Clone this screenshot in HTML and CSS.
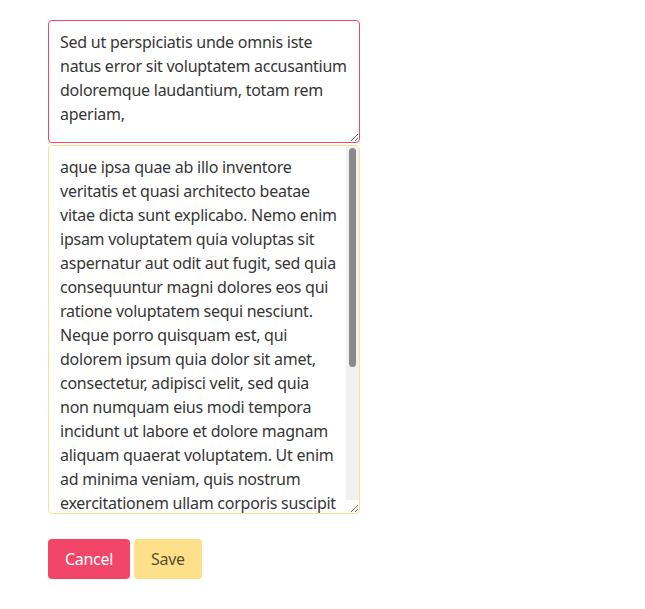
FILE: index.html
```html
<!DOCTYPE html>
<html>
<head>
<meta charset="utf-8">
<link rel="stylesheet" href="styles.css">
</head>
<body>
<div class="form">
<textarea class="textarea is-danger">Sed ut perspiciatis unde omnis iste natus error sit voluptatem accusantium doloremque laudantium, totam rem aperiam,</textarea>
<div class="scroll-wrap">
<textarea class="textarea is-warning tall">aque ipsa quae ab illo inventore veritatis et quasi architecto beatae vitae dicta sunt explicabo. Nemo enim ipsam voluptatem quia voluptas sit aspernatur aut odit aut fugit, sed quia consequuntur magni dolores eos qui ratione voluptatem sequi nesciunt. Neque porro quisquam est, qui dolorem ipsum quia dolor sit amet, consectetur, adipisci velit, sed quia non numquam eius modi tempora incidunt ut labore et dolore magnam aliquam quaerat voluptatem. Ut enim ad minima veniam, quis nostrum exercitationem ullam corporis suscipit laboriosam, nisi ut aliquid ex ea commodi consequatur? Quis autem vel eum iure reprehenderit qui in ea voluptate velit esse quam nihil molestiae consequatur, vel illum qui dolorem eum fugiat quo voluptas nulla pariatur?</textarea>
<div class="scrollbar" aria-hidden="true"><div class="scrollbar-thumb"></div></div>
</div>
<div class="buttons">
<button class="button is-danger">Cancel</button>
<button class="button is-warning">Save</button>
</div>
</div>
</body>
</html>
```
FILE: styles.css
```css
html, body {
  margin: 0;
  background: #fff;
}
body {
  padding: 20px 48px;
  font-family: "Noto Sans", "Open Sans", sans-serif;
}
.form {
  width: 312px;
  display: flex;
  flex-direction: column;
}
.textarea {
  display: block;
  box-sizing: border-box;
  width: 312px;
  height: 123px;
  margin: 0 0 2px 0;
  padding: 9px 11px 13px 11px;
  border: 1px solid #dbdbdb;
  border-radius: 4px;
  font-family: inherit;
  font-size: 16px;
  letter-spacing: -0.25px;
  line-height: 24px;
  color: #363636;
  background: #fff;
  resize: vertical;
  outline: none;
}
.textarea.is-danger { border-color: #f14668; }
.textarea.is-warning { border-color: #ffe08a; }
.scroll-wrap {
  position: relative;
}
.textarea.tall {
  height: 369px;
  margin: 0;
  padding-right: 20px;
  overflow-y: hidden;
}
.scrollbar {
  position: absolute;
  top: 1px;
  right: 1px;
  width: 13px;
  height: 354px;
  background: #f1f1f1;
  box-sizing: border-box;
  padding: 2px 3px;
}
.scrollbar-thumb {
  width: 7px;
  height: 219px;
  background: #8a8a8a;
  border-radius: 4px;
}
.buttons {
  display: flex;
  gap: 4px;
  margin-top: 25px;
}
.button {
  box-sizing: border-box;
  height: 40px;
  padding: 0 16px;
  border: 1px solid transparent;
  border-radius: 4px;
  font-family: inherit;
  font-size: 16px;
  letter-spacing: -0.3px;
  cursor: pointer;
}
.button.is-danger { background: #f14668; color: #fff; }
.button.is-warning { background: #ffe08a; color: rgba(0,0,0,.7); }
```
